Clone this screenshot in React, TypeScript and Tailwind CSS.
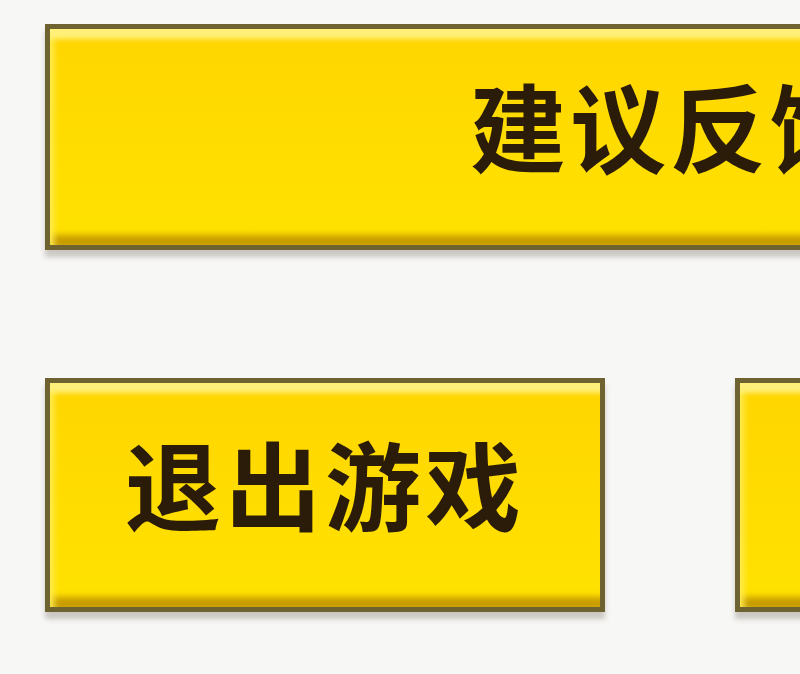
import React from 'react';

const btn =
  'flex shrink-0 items-center justify-center border-[5px] border-[#6e6230] bg-gradient-to-b from-[#ffd500] via-[#ffdc00] to-[#ffe200] shadow-[inset_0_14px_5px_-4px_#fff07a,inset_8px_0_6px_-4px_#ffec50,inset_0_-16px_6px_-6px_#c89c00,0_7px_5px_rgba(90,80,70,0.28)]';

const label =
  'text-[96px] font-semibold leading-none tracking-[4px] text-[#2a1c08] [font-family:"Noto_Sans_CJK_SC",sans-serif] -translate-y-[13px]';

export default function App() {
  return (
    <div className="h-[674px] w-[800px] overflow-hidden bg-[#f7f7f5] pl-[45px] pt-[24px]">
      <div className={`${btn} h-[226px] w-[1250px]`}>
        <span className={label}>建议反馈</span>
      </div>

      <div className="mt-[128px] flex gap-[130px]">
        <div className={`${btn} h-[234px] w-[560px]`}>
          <span className={label}>退出游戏</span>
        </div>
        <div className={`${btn} h-[234px] w-[560px]`}>
          <span className={label}>重新开始</span>
        </div>
      </div>
    </div>
  );
}
